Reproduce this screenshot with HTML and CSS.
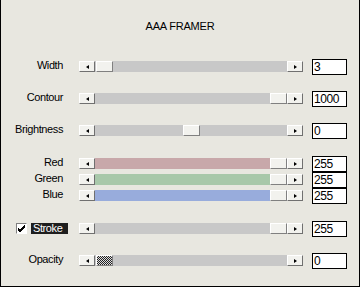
FILE: index.html
```html
<!DOCTYPE html>
<html lang="en">

<head>
    <meta charset="UTF-8">
    <title>AAA FRAMER</title>
    <link rel="stylesheet" href="styles.css">
</head>

<body>
    <div class="window">
        <div class="title">AAA FRAMER</div>

        <div class="rows">
            <!-- Width -->
            <div class="row">
                <div class="label">Width</div>
                <div class="slider">
                    <div class="btn"><span class="arrow-left"></span></div>
                    <div class="track">
                        <div class="thumb" style="margin-left: 1px"></div>
                    </div>
                    <div class="btn"><span class="arrow-right"></span></div>
                </div>
                <div class="edit">3</div>
            </div>

            <!-- Contour -->
            <div class="row gap">
                <div class="label">Contour</div>
                <div class="slider">
                    <div class="btn"><span class="arrow-left"></span></div>
                    <div class="track">
                        <div class="thumb" style="margin-left: 175px"></div>
                    </div>
                    <div class="btn"><span class="arrow-right"></span></div>
                </div>
                <div class="edit">1000</div>
            </div>

            <!-- Brightness -->
            <div class="row gap">
                <div class="label">Brightness</div>
                <div class="slider">
                    <div class="btn"><span class="arrow-left"></span></div>
                    <div class="track">
                        <div class="thumb" style="margin-left: 88px"></div>
                    </div>
                    <div class="btn"><span class="arrow-right"></span></div>
                </div>
                <div class="edit">0</div>
            </div>

            <!-- Red / Green / Blue -->
            <div class="row gap-big">
                <div class="label">Red</div>
                <div class="slider">
                    <div class="btn"><span class="arrow-left"></span></div>
                    <div class="track red">
                        <div class="thumb" style="margin-left: 175px"></div>
                    </div>
                    <div class="btn"><span class="arrow-right"></span></div>
                </div>
                <div class="edit">255</div>
            </div>
            <div class="row">
                <div class="label">Green</div>
                <div class="slider">
                    <div class="btn"><span class="arrow-left"></span></div>
                    <div class="track green">
                        <div class="thumb" style="margin-left: 175px"></div>
                    </div>
                    <div class="btn"><span class="arrow-right"></span></div>
                </div>
                <div class="edit">255</div>
            </div>
            <div class="row">
                <div class="label">Blue</div>
                <div class="slider">
                    <div class="btn"><span class="arrow-left"></span></div>
                    <div class="track blue">
                        <div class="thumb" style="margin-left: 175px"></div>
                    </div>
                    <div class="btn"><span class="arrow-right"></span></div>
                </div>
                <div class="edit">255</div>
            </div>

            <!-- Stroke -->
            <div class="row gap-big">
                <div class="label check-label">
                    <span class="checkbox">
                        <svg width="9" height="9" viewBox="0 0 9 9">
                            <path d="M1 4 L3 6 L8 1 M1 5 L3 7 L8 2 M1 6 L3 8 L8 3" stroke="#000" stroke-width="1" fill="none"/>
                        </svg>
                    </span>
                    <span class="selected">Stroke</span>
                </div>
                <div class="slider">
                    <div class="btn"><span class="arrow-left"></span></div>
                    <div class="track">
                        <div class="thumb" style="margin-left: 175px"></div>
                    </div>
                    <div class="btn"><span class="arrow-right"></span></div>
                </div>
                <div class="edit">255</div>
            </div>

            <!-- Opacity -->
            <div class="row gap">
                <div class="label">Opacity</div>
                <div class="slider">
                    <div class="btn"><span class="arrow-left"></span></div>
                    <div class="track">
                        <div class="thumb dither" style="margin-left: 1px"></div>
                    </div>
                    <div class="btn"><span class="arrow-right"></span></div>
                </div>
                <div class="edit">0</div>
            </div>
        </div>
    </div>
</body>

</html>
```

FILE: styles.css
```css
body {
    margin: 0;
    font-family: "Liberation Sans", Arial, sans-serif;
    font-size: 11px;
    color: #000;
}

.window {
    width: 360px;
    height: 287px;
    box-sizing: border-box;
    background-color: #e8e7e0;
    border: 1px solid #000;
    border-top: none;
    overflow: hidden;
}

.title {
    margin-top: 20px;
    height: 13px;
    line-height: 13px;
    text-align: center;
    letter-spacing: -0.2px;
}

.rows {
    margin-top: 26px;
    display: flex;
    flex-direction: column;
}

.row {
    display: flex;
    height: 16px;
    align-items: flex-start;
}

.row.gap {
    margin-top: 16px;
}

.row.gap-big {
    margin-top: 17px;
}

.label {
    width: 62px;
    flex-shrink: 0;
    text-align: right;
    line-height: 13px;
    letter-spacing: -0.4px;
}

.check-label {
    display: flex;
    text-align: left;
    overflow: visible;
    white-space: nowrap;
}

.checkbox {
    margin-left: 15px;
    margin-top: 2px;
    width: 11px;
    height: 11px;
    box-sizing: border-box;
    flex-shrink: 0;
    background-color: #fff;
    border: 1px solid;
    border-color: #808080 #fff #fff #808080;
    display: flex;
    align-items: center;
    justify-content: center;
}

.selected {
    margin-left: 4px;
    margin-top: 2px;
    height: 11px;
    line-height: 11px;
    width: 37px;
    flex-shrink: 0;
    padding-left: 2px;
    box-sizing: border-box;
    background-color: #1e1e1e;
    color: #fff;
}

.slider {
    margin-left: 16px;
    margin-top: 2px;
    width: 224px;
    height: 11px;
    display: flex;
    flex-shrink: 0;
}

.btn,
.thumb {
    width: 16px;
    height: 11px;
    box-sizing: border-box;
    flex-shrink: 0;
    background-color: #f2f2ee;
    border: 1px solid;
    border-color: #fff #808080 #808080 #fff;
    box-shadow: 1px 1px 0 #404040;
    display: flex;
    align-items: center;
    justify-content: center;
}

.btn {
    box-shadow: none;
    border-color: #fff #707070 #707070 #fff;
}

.thumb {
    width: 17px;
    box-shadow: none;
}

.dither {
    background: repeating-conic-gradient(#222 0 25%, #ddd 0 50%) 0 0 / 2px 2px;
}

.track {
    flex: 1;
    display: flex;
    background-color: #c8c8c8;
}

.track.red {
    background-color: #c8a8aa;
}

.track.green {
    background-color: #a8c8aa;
}

.track.blue {
    background-color: #98acdc;
}

.arrow-left {
    width: 0;
    height: 0;
    border-top: 2px solid transparent;
    border-bottom: 2px solid transparent;
    border-right: 3px solid #000;
}

.arrow-right {
    width: 0;
    height: 0;
    border-top: 2px solid transparent;
    border-bottom: 2px solid transparent;
    border-left: 3px solid #000;
}

.edit {
    margin-left: 9px;
    width: 35px;
    height: 16px;
    box-sizing: border-box;
    flex-shrink: 0;
    background-color: #fff;
    border: 1px solid #000;
    padding-left: 1px;
    font-size: 12px;
    line-height: 14px;
    letter-spacing: -0.4px;
}
```
